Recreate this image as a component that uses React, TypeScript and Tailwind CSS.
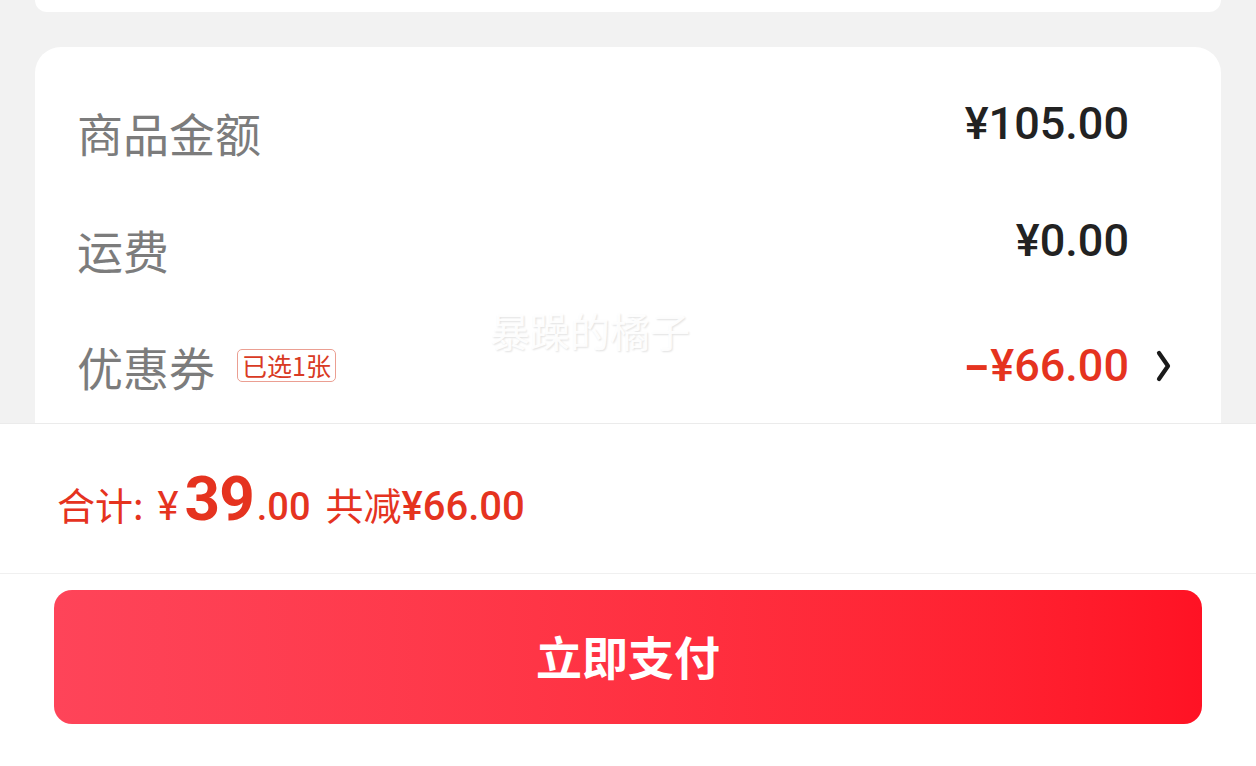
import React from "react";

const cjk = { fontFamily: '"Noto Sans CJK SC", "Noto Sans", sans-serif' };
const num = { fontFamily: 'Roboto, "Noto Sans CJK SC", sans-serif' };

function Chevron() {
  return (
    <svg width="20" height="34" viewBox="0 0 20 34" fill="none">
      <path d="M5 4 L14 17 L5 30" stroke="#1a1a1a" strokeWidth="4.2" strokeLinecap="round" strokeLinejoin="round" />
    </svg>
  );
}

function Row({ label, value, red, badge, chevron, lift }: { label: string; value: React.ReactNode; red?: boolean; badge?: string; chevron?: boolean; lift?: boolean }) {
  return (
    <div className="flex h-[117px] items-center">
      <div className="flex items-center gap-[22px]">
        <span className="text-[46px] leading-none text-[#7c7c7c]" style={cjk}>{label}</span>
        {badge && (
          <span className="flex h-[33px] items-center rounded-[5px] border border-[#eb9f92] px-[4px] text-[25px] leading-none text-[#d93a24]" style={cjk}>{badge}</span>
        )}
      </div>
      <div className="flex-1" />
      <span
        className={`text-[45px] font-medium leading-none ${red ? "text-[#e5331f]" : "text-[#222222]"} ${lift ? "mb-[16px]" : ""}`}
        style={num}
      >
        {value}
      </span>
      <div className="flex w-[45px] justify-end">{chevron && <Chevron />}</div>
    </div>
  );
}

export default function App() {
  return (
    <div className="relative flex h-[766px] w-full flex-col overflow-hidden bg-[#f2f2f2]">
      <div className="h-[423px] overflow-hidden px-[35px]">
        <div className="h-[12px] rounded-b-[26px] bg-white" />
        <div className="mt-[35px] h-[420px] rounded-t-[26px] bg-white pl-[42px] pr-[47px] pt-[26px]">
          <Row label="商品金额" value="¥105.00" lift />
          <Row label="运费" value="¥0.00" lift />
          <Row
            label="优惠券"
            value={
              <>
                <span className="inline-block scale-x-[1.6] px-[5px] font-bold">-</span>¥66.00
              </>
            }
            red
            badge="已选1张"
            chevron
          />
        </div>
      </div>
      <div className="flex flex-1 flex-col border-t border-[#ebebeb] bg-white">
        <div className="flex h-[150px] items-center border-b border-[#f0f0f0] pl-[57px]">
          <div className="flex items-baseline text-[#e5331f]">
            <span className="text-[38px] leading-none" style={cjk}>合计:</span>
            <span className="ml-[14px] text-[40px] leading-none" style={num}>¥</span>
            <span className="ml-[6px] text-[62px] font-bold leading-none tracking-[-1px]" style={num}>39</span>
            <span className="ml-[3px] text-[38px] font-medium leading-none" style={num}>.00</span>
            <span className="ml-[15px] text-[38px] leading-none" style={cjk}>共减</span>
            <span className="text-[40px] font-medium leading-none" style={num}>¥66.00</span>
          </div>
        </div>
        <div className="px-[54px] pt-[16px]">
          <button
            className="flex h-[134px] w-full items-center justify-center rounded-[18px] bg-gradient-to-r from-[#fe4459] to-[#ff1224] pb-[4px] text-[46px] font-bold text-white"
            style={cjk}
          >
            立即支付
          </button>
        </div>
      </div>
      <div
        className="pointer-events-none absolute left-[490px] top-[310px] text-[40px] leading-none text-white/90 [text-shadow:1px_1px_2px_rgba(0,0,0,0.12)]"
        style={cjk}
      >
        暴躁的橘子
      </div>
    </div>
  );
}
